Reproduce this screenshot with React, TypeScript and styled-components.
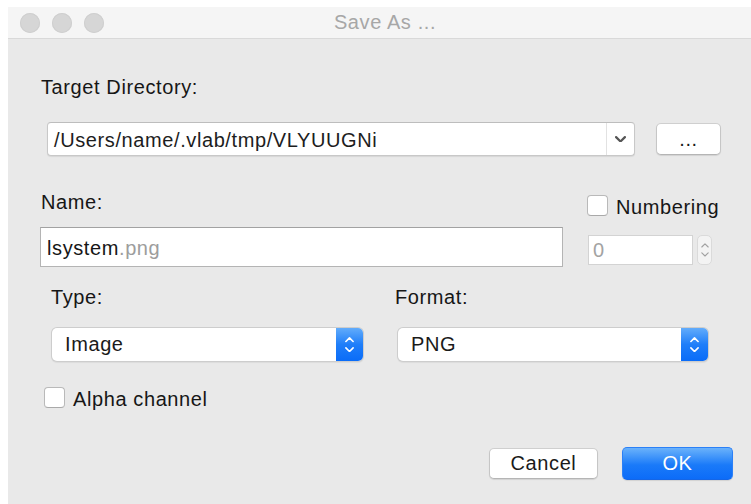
import React from "react";
import styled, { createGlobalStyle } from "styled-components";

const GlobalStyle = createGlobalStyle`
  html, body {
    margin: 0;
    padding: 0;
    background: #ffffff;
  }
  body {
    font-family: "Liberation Sans", Arial, Helvetica, sans-serif;
  }
`;

const Page = styled.div`
  width: 751px;
  height: 504px;
  padding: 7px 0 0 8px;
  box-sizing: border-box;
  overflow: hidden;
`;

const Window = styled.div`
  width: 743px;
  height: 497px;
  background: #e9e9e9;
  display: flex;
  flex-direction: column;
  font-size: 20px;
  letter-spacing: 0.6px;
  color: #161616;
`;

const TitleBar = styled.div`
  height: 31px;
  flex: none;
  display: flex;
  align-items: center;
  position: relative;
  background: #f5f5f5;
  border-bottom: 1px solid #d9d9d9;
`;

const Lights = styled.div`
  display: flex;
  gap: 12px;
  padding-left: 12px;
`;

const Light = styled.span`
  width: 20px;
  height: 20px;
  border-radius: 50%;
  background: #d6d6d6;
  box-shadow: inset 0 0 0 1px #cfcfcf;
`;

const Title = styled.div`
  position: absolute;
  left: 11px;
  right: 0;
  top: 0;
  bottom: 0;
  display: flex;
  align-items: center;
  justify-content: center;
  color: #a7a7a7;
  pointer-events: none;
`;

const Body = styled.div`
  flex: 1;
  display: flex;
  flex-direction: column;
`;

const Label = styled.div<{ $ml?: number }>`
  height: 24px;
  line-height: 24px;
  margin-left: ${(p) => p.$ml ?? 0}px;
  white-space: nowrap;
`;

const DirRow = styled.div`
  display: flex;
  align-items: center;
  gap: 21px;
  margin: 23px 0 0 39px;
`;

const Combo = styled.div`
  width: 588px;
  height: 34px;
  box-sizing: border-box;
  display: flex;
  background: #fff;
  border: 1px solid #c8c8c8;
  border-top-color: #bdbdbd;
  border-radius: 4px;
  box-shadow: 0 1px 1px rgba(0, 0, 0, 0.08);
`;

const ComboText = styled.div`
  flex: 1;
  line-height: 32px;
  padding: 1px 0 0 6px;
  color: #1d1d1d;
  white-space: nowrap;
  overflow: hidden;
`;

const ComboArrow = styled.div`
  width: 27px;
  border-left: 1px solid #e2e2e2;
  display: flex;
  align-items: center;
  justify-content: center;
  color: #555;
`;

const PushButton = styled.button<{ $w: number; $h: number }>`
  width: ${(p) => p.$w}px;
  height: ${(p) => p.$h}px;
  padding: 0;
  font: inherit;
  letter-spacing: inherit;
  color: #1a1a1a;
  background: #fff;
  border: 1px solid #c6c6c6;
  border-top-color: #cfcfcf;
  border-bottom-color: #b5b5b5;
  border-radius: 5px;
  box-shadow: 0 1px 1px rgba(0, 0, 0, 0.1);
  display: flex;
  align-items: center;
  justify-content: center;
`;

const DefaultButton = styled(PushButton)`
  color: #fff;
  border: 1px solid #2b80f7;
  border-bottom-color: #1566e6;
  background: linear-gradient(#6ab2fb, #1a7af9 55%, #0c6cf8);
`;

const NameRow = styled.div`
  display: flex;
  margin: 34px 0 0 32px;
`;

const NameColumn = styled.div`
  display: flex;
  flex-direction: column;
  width: 523px;
`;

const TextField = styled.div`
  margin-top: 13px;
  height: 40px;
  box-sizing: border-box;
  background: #fff;
  border: 1px solid #b4b4b4;
  border-top-color: #a2a2a2;
  padding: 2px 0 0 6px;
  line-height: 36px;
  white-space: nowrap;
`;

const Muted = styled.span`
  color: #9d9d9d;
`;

const SideColumn = styled.div`
  display: flex;
  flex-direction: column;
  margin-left: 24px;
  padding-top: 5px;
`;

const CheckRow = styled.label<{ $ml?: number }>`
  display: flex;
  align-items: center;
  gap: 8px;
  height: 21px;
  margin-left: ${(p) => p.$ml ?? 0}px;
`;

const CheckText = styled.span`
  padding-top: 3px;
`;

const CheckBox = styled.span`
  width: 21px;
  height: 21px;
  box-sizing: border-box;
  background: #fff;
  border: 1px solid #b9b9b9;
  border-bottom-color: #a9a9a9;
  border-radius: 4px;
  flex: none;
`;

const SpinRow = styled.div`
  display: flex;
  align-items: center;
  gap: 4px;
  margin-top: 19px;
  margin-left: 1px;
`;

const SpinField = styled.div`
  width: 105px;
  height: 30px;
  box-sizing: border-box;
  background: #fff;
  border: 1px solid #d3d3d3;
  padding-left: 4px;
  line-height: 28px;
  color: #a3a3a3;
`;

const Stepper = styled.div`
  width: 15px;
  height: 30px;
  box-sizing: border-box;
  border: 1px solid #dadada;
  border-radius: 5px;
  background: #f3f3f3;
  display: flex;
  flex-direction: column;
  align-items: center;
  justify-content: center;
  gap: 4px;
  color: #a0a0a0;
`;

const TypeRow = styled.div`
  display: flex;
  margin: 18px 0 0 43px;
`;

const FieldGroup = styled.div<{ $w: number }>`
  width: ${(p) => p.$w}px;
  display: flex;
  flex-direction: column;
`;

const Popup = styled.div<{ $w: number; $ml: number }>`
  width: ${(p) => p.$w}px;
  height: 33px;
  margin: 19px 0 0 ${(p) => p.$ml}px;
  box-sizing: border-box;
  display: flex;
  background: #fff;
  border-radius: 5px;
  box-shadow: 0 0 0 1px #cdcdcd, 0 1px 1px 1px rgba(0, 0, 0, 0.06);
  overflow: hidden;
`;

const PopupText = styled.div`
  flex: 1;
  padding-left: 13px;
  line-height: 33px;
  color: #1a1a1a;
`;

const PopupArrows = styled.div`
  width: 27px;
  display: flex;
  flex-direction: column;
  align-items: center;
  justify-content: center;
  gap: 4px;
  color: #fff;
  background: linear-gradient(#62acfb, #1f7ef9 50%, #0a6cf8);
`;

const AlphaRow = styled.div`
  margin: 26px 0 0 36px;
`;

const Buttons = styled.div`
  display: flex;
  align-items: center;
  justify-content: flex-end;
  gap: 24px;
  margin-top: 39px;
  padding-right: 18px;
`;

const Chevron = ({ dir, size, width = 1.8 }: { dir: "up" | "down"; size: number; width?: number }) => (
  <svg width={size} height={size * 0.6} viewBox="0 0 10 6" fill="none">
    <path
      d={dir === "down" ? "M1 1 L5 5 L9 1" : "M1 5 L5 1 L9 5"}
      stroke="currentColor"
      strokeWidth={width}
      strokeLinecap="round"
      strokeLinejoin="round"
    />
  </svg>
);

export default function App() {
  return (
    <>
      <GlobalStyle />
      <Page>
        <Window>
          <TitleBar>
            <Lights>
              <Light />
              <Light />
              <Light />
            </Lights>
            <Title>Save As ...</Title>
          </TitleBar>
          <Body>
            <Label $ml={33} style={{ marginTop: 36 }}>
              Target Directory:
            </Label>
            <DirRow>
              <Combo>
                <ComboText>/Users/name/.vlab/tmp/VLYUUGNi</ComboText>
                <ComboArrow>
                  <Chevron dir="down" size={11} width={2} />
                </ComboArrow>
              </Combo>
              <PushButton $w={65} $h={32}>...</PushButton>
            </DirRow>

            <NameRow>
              <NameColumn>
                <Label $ml={1}>Name:</Label>
                <TextField>
                  lsystem<Muted>.png</Muted>
                </TextField>
              </NameColumn>
              <SideColumn>
                <CheckRow>
                  <CheckBox />
                  <CheckText>Numbering</CheckText>
                </CheckRow>
                <SpinRow>
                  <SpinField>0</SpinField>
                  <Stepper>
                    <Chevron dir="up" size={8} width={1.4} />
                    <Chevron dir="down" size={8} width={1.4} />
                  </Stepper>
                </SpinRow>
              </SideColumn>
            </NameRow>

            <TypeRow>
              <FieldGroup $w={344}>
                <Label>Type:</Label>
                <Popup $w={311} $ml={1}>
                  <PopupText>Image</PopupText>
                  <PopupArrows>
                    <Chevron dir="up" size={9} width={1.8} />
                    <Chevron dir="down" size={9} width={1.8} />
                  </PopupArrows>
                </Popup>
              </FieldGroup>
              <FieldGroup $w={320}>
                <Label>Format:</Label>
                <Popup $w={310} $ml={3}>
                  <PopupText>PNG</PopupText>
                  <PopupArrows>
                    <Chevron dir="up" size={9} width={1.8} />
                    <Chevron dir="down" size={9} width={1.8} />
                  </PopupArrows>
                </Popup>
              </FieldGroup>
            </TypeRow>

            <AlphaRow>
              <CheckRow>
                <CheckBox />
                <CheckText>Alpha channel</CheckText>
              </CheckRow>
            </AlphaRow>

            <Buttons>
              <PushButton $w={109} $h={31}>Cancel</PushButton>
              <DefaultButton $w={111} $h={33}>OK</DefaultButton>
            </Buttons>
          </Body>
        </Window>
      </Page>
    </>
  );
}
